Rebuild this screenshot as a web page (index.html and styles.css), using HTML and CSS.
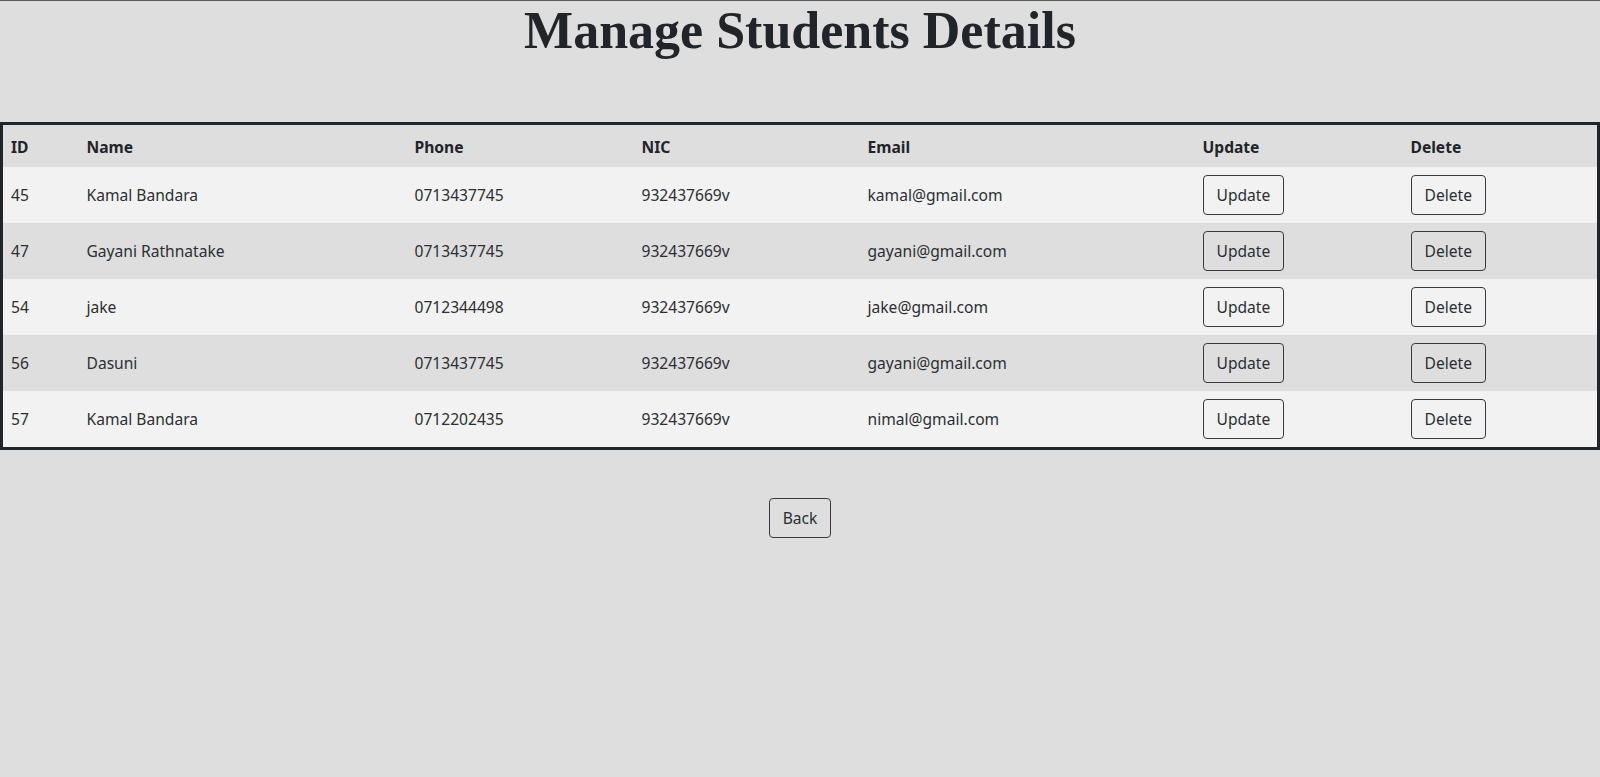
FILE: index.html
```html
<!DOCTYPE html>
<html lang="en">
<head>
<meta charset="utf-8">
<title>Manage Students Details</title>
<link rel="stylesheet" href="styles.css">
</head>
<body>
<div class="page">
  <h1 class="title">Manage Students Details</h1>
  <table class="students">
    <colgroup>
      <col class="c-id"><col class="c-name"><col class="c-phone"><col class="c-nic"><col class="c-email"><col class="c-upd"><col class="c-del">
    </colgroup>
    <thead>
      <tr><th>ID</th><th>Name</th><th>Phone</th><th>NIC</th><th>Email</th><th>Update</th><th>Delete</th></tr>
    </thead>
    <tbody>
      <tr><td>45</td><td>Kamal Bandara</td><td>0713437745</td><td>932437669v</td><td>kamal@gmail.com</td><td><button class="btn">Update</button></td><td><button class="btn">Delete</button></td></tr>
      <tr><td>47</td><td>Gayani Rathnatake</td><td>0713437745</td><td>932437669v</td><td>gayani@gmail.com</td><td><button class="btn">Update</button></td><td><button class="btn">Delete</button></td></tr>
      <tr><td>54</td><td>jake</td><td>0712344498</td><td>932437669v</td><td>jake@gmail.com</td><td><button class="btn">Update</button></td><td><button class="btn">Delete</button></td></tr>
      <tr><td>56</td><td>Dasuni</td><td>0713437745</td><td>932437669v</td><td>gayani@gmail.com</td><td><button class="btn">Update</button></td><td><button class="btn">Delete</button></td></tr>
      <tr><td>57</td><td>Kamal Bandara</td><td>0712202435</td><td>932437669v</td><td>nimal@gmail.com</td><td><button class="btn">Update</button></td><td><button class="btn">Delete</button></td></tr>
    </tbody>
  </table>
  <div class="actions">
    <button class="btn">Back</button>
  </div>
</div>
</body>
</html>
```
FILE: styles.css
```css
html, body {
  margin: 0;
  padding: 0;
  background: #dedede;
}
body {
  font-family: "Noto Sans", "Open Sans", sans-serif;
  font-size: 15.6px;
  line-height: 24px;
  color: #2b2f33;
  min-height: 777px;
}
.page {
  border-top: 1px solid #5a5a5a;
}
.title {
  margin: 0;
  text-align: center;
  font-family: "Liberation Serif", "Times New Roman", serif;
  font-weight: bold;
  font-size: 52px;
  line-height: 60px;
  color: #212529;
  height: 121px;
}
.students {
  width: 100%;
  border-collapse: collapse;
  border: 3px solid #212529;
  table-layout: fixed;
}
.c-id { width: 77px; }
.c-name { width: 328px; }
.c-phone { width: 227px; }
.c-nic { width: 226px; }
.c-email { width: 335px; }
.c-upd { width: 208px; }
.students th, .students td {
  text-align: left;
  padding: 8px;
  vertical-align: middle;
}
.students th {
  font-weight: bold;
  color: #212529;
  height: 25px;
  padding-top: 9px;
  padding-bottom: 8px;
  background: #dedede;
}
.students td {
  height: 39.8px;
}
.students tbody tr:nth-child(odd) td { background: #f2f2f2; }
.students tbody tr:nth-child(even) td { background: #dedede; }
.btn {
  font-family: inherit;
  font-size: 15.6px;
  color: #2b2f33;
  background: transparent;
  border: 1px solid #3a3a3a;
  border-radius: 4px;
  padding: 7px 13px;
  line-height: 24px;
}
.actions {
  display: flex;
  justify-content: center;
  padding-top: 48px;
}
```
